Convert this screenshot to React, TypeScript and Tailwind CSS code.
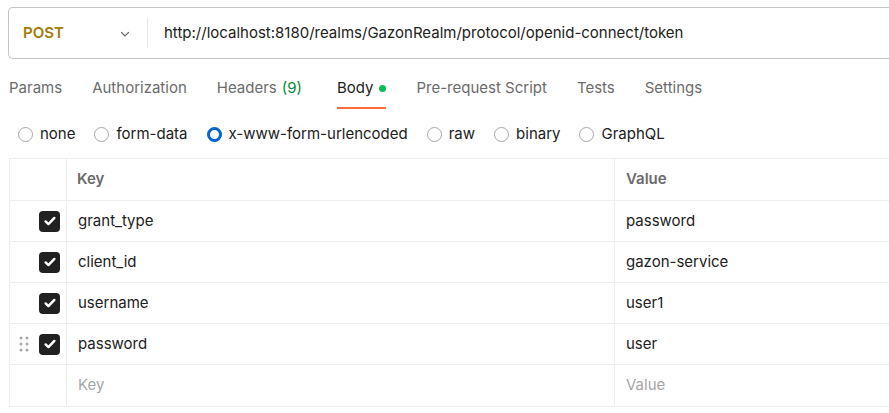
import React from 'react';

const tabs = [
  { label: 'Params' },
  { label: 'Authorization' },
  { label: 'Headers', count: '(9)' },
  { label: 'Body', active: true },
  { label: 'Pre-request Script' },
  { label: 'Tests' },
  { label: 'Settings' },
];

const bodyTypes = ['none', 'form-data', 'x-www-form-urlencoded', 'raw', 'binary', 'GraphQL'];

const rows = [
  { key: 'grant_type', value: 'password' },
  { key: 'client_id', value: 'gazon-service' },
  { key: 'username', value: 'user1' },
  { key: 'password', value: 'user', hover: true },
];

function Checkbox() {
  return (
    <span className="flex h-[21px] w-[21px] items-center justify-center rounded-[4px] bg-[#212121]">
      <svg width="14" height="14" viewBox="0 0 16 16" fill="none">
        <path d="M3 8.5l3.2 3L13 4.5" stroke="white" strokeWidth="2.8" strokeLinecap="round" strokeLinejoin="round" />
      </svg>
    </span>
  );
}

function DragHandle() {
  return (
    <svg width="10" height="16" viewBox="0 0 10 16" fill="#a6a6a6">
      <circle cx="2" cy="2" r="1.5" />
      <circle cx="8" cy="2" r="1.5" />
      <circle cx="2" cy="8" r="1.5" />
      <circle cx="8" cy="8" r="1.5" />
      <circle cx="2" cy="14" r="1.5" />
      <circle cx="8" cy="14" r="1.5" />
    </svg>
  );
}

export default function App() {
  return (
    <div className="h-[413px] w-[889px] overflow-hidden bg-white font-['Inter',sans-serif] text-[15px] text-[#212121]">
      {/* URL bar */}
      <div className="ml-2 mt-[7px] flex h-[52px] items-center rounded-l-[5px] border border-r-0 border-[#c4c4c4]">
        <div className="flex w-[138px] items-center justify-between pl-[14px] pr-[16px] pt-[1px]">
          <span className="font-semibold text-[#a47a08]">POST</span>
          <svg width="12" height="12" viewBox="0 0 12 12" fill="none">
            <path d="M2.5 4.5L6 8l3.5-3.5" stroke="#6b6b6b" strokeWidth="1.2" strokeLinecap="round" />
          </svg>
        </div>
        <div className="h-[30px] w-px bg-[#e6e6e6]" />
        <span className="pl-[16px] pt-[1px]">http://localhost:8180/realms/GazonRealm/protocol/openid-connect/token</span>
      </div>

      {/* Tabs */}
      <div className="ml-[9px] mt-[18px] flex h-[32px] items-start gap-[30px]">
        {tabs.map((t) => (
          <div key={t.label} className={`relative flex h-full items-start ${t.active ? 'ml-[5px]' : ''}`}>
            <span className={t.active ? 'text-[#212121]' : 'text-[#6b6b6b]'}>{t.label}</span>
            {t.count && <span className="ml-[5px] text-[#0a8a3a]">{t.count}</span>}
            {t.active && (
              <>
                <span className="ml-[6px] mt-[8px] h-[7px] w-[7px] rounded-full bg-[#0cbb52]" />
                <span className="absolute bottom-0 left-0 right-0 h-[2px] bg-[#ff6c37]" />
              </>
            )}
          </div>
        ))}
      </div>

      {/* Body types */}
      <div className="ml-[18px] mt-[13px] flex h-[24px] items-center gap-[19px]">
        {bodyTypes.map((b) => {
          const sel = b === 'x-www-form-urlencoded';
          return (
            <label key={b} className="flex items-center gap-[7px]">
              {sel ? (
                <span className="h-[15px] w-[15px] rounded-full border-[3.5px] border-[#0265d2]" />
              ) : (
                <span className="h-[15px] w-[15px] rounded-full border border-[#a6a6a6]" />
              )}
              <span>{b}</span>
            </label>
          );
        })}
      </div>

      {/* Table */}
      <div className="ml-[9px] mt-[12px] border-y border-l border-[#ededed]">
        <div className="flex h-[42px] items-center border-b border-[#ededed]">
          <div className="h-full w-[57px] border-r border-[#ededed]" />
          <div className="flex h-full w-[548px] items-center border-r border-[#ededed] pl-[10px] font-semibold text-[#6b6b6b]">Key</div>
          <div className="flex h-full flex-1 items-center pl-[11px] font-semibold text-[#6b6b6b]">Value</div>
        </div>
        {rows.map((r) => (
          <div key={r.key} className="flex h-[41px] items-center border-b border-[#ededed]">
            <div className="flex h-full w-[57px] items-center border-r border-[#ededed] pl-[9px]">
              <span className="flex w-[20px] items-center">{r.hover && <DragHandle />}</span>
              <Checkbox />
            </div>
            <div className="flex h-full w-[548px] items-center border-r border-[#ededed] pl-[11px]">{r.key}</div>
            <div className="flex h-full flex-1 items-center pl-[11px]">{r.value}</div>
          </div>
        ))}
        <div className="flex h-[41px] items-center">
          <div className="h-full w-[57px] border-r border-[#ededed]" />
          <div className="flex h-full w-[548px] items-center border-r border-[#ededed] pl-[11px] text-[#a6a6a6]">Key</div>
          <div className="flex h-full flex-1 items-center pl-[11px] text-[#a6a6a6]">Value</div>
        </div>
      </div>
    </div>
  );
}
